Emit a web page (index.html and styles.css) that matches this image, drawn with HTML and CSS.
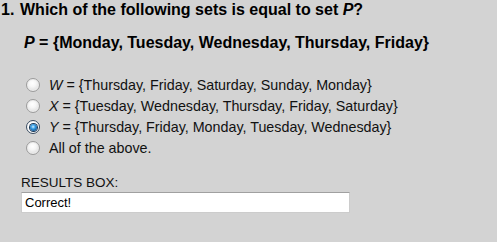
FILE: index.html
```html
<!DOCTYPE html>
<html>
<head>
<meta charset="utf-8">
<link rel="stylesheet" href="styles.css">
</head>
<body>
<div class="quiz">
  <div class="question"><span class="num">1.</span><span>Which of the following sets is equal to set <i>P</i>?</span></div>
  <div class="setp"><i>P</i> = {Monday, Tuesday, Wednesday, Thursday, Friday}</div>
  <div class="options">
    <label class="opt"><span class="radio"></span><span><i>W</i> = {Thursday, Friday, Saturday, Sunday, Monday}</span></label>
    <label class="opt"><span class="radio"></span><span><i>X</i> = {Tuesday, Wednesday, Thursday, Friday, Saturday}</span></label>
    <label class="opt"><span class="radio checked"></span><span><i>Y</i> = {Thursday, Friday, Monday, Tuesday, Wednesday}</span></label>
    <label class="opt"><span class="radio"></span><span>All of the above.</span></label>
  </div>
  <div class="results">
    <div class="rlabel">RESULTS BOX:</div>
    <div class="rbox">Correct!</div>
  </div>
</div>
</body>
</html>
```

FILE: styles.css
```css
html, body {
  margin: 0;
  padding: 0;
  background: #d3d3d3;
}
body {
  font-family: "Liberation Sans", Arial, sans-serif;
  color: #000;
  width: 497px;
  height: 242px;
  overflow: hidden;
}
.quiz {
  padding: 0 0 0 1px;
}
.question {
  display: flex;
  font-weight: bold;
  font-size: 16px;
  line-height: 18px;
  padding-top: 1px;
}
.num {
  width: 19px;
}
.setp {
  font-weight: bold;
  font-size: 16px;
  line-height: 18px;
  margin: 15px 0 0 23px;
}
.options {
  margin: 24px 0 0 25px;
  display: flex;
  flex-direction: column;
  gap: 3px;
}
.opt {
  display: flex;
  align-items: center;
  font-size: 14.3px;
  line-height: 18px;
  color: #111;
}
.radio {
  width: 12px;
  height: 12px;
  border-radius: 50%;
  border: 1px solid #9c9c9c;
  background: radial-gradient(circle at 45% 35%, #ffffff 0%, #f6f6f6 35%, #d0d0d0 100%);
  box-shadow: inset 0 0 0 1px #ececec;
  margin-right: 9px;
  box-sizing: content-box;
  position: relative;
}
.radio.checked {
  border-color: #3a4d62;
  background: radial-gradient(circle at 50% 50%, #ffffff 55%, #dcdcdc 100%);
  box-shadow: none;
}
.radio.checked::after {
  content: "";
  position: absolute;
  left: 2.5px;
  top: 2.5px;
  width: 7px;
  height: 7px;
  border-radius: 50%;
  background: radial-gradient(circle at 45% 40%, #d2f0ff 0%, #3aa0e6 35%, #0b4c8a 80%, #0a2e52 100%);
  box-shadow: 0 0 0 1px #1a3856;
}
.results {
  margin: 18px 0 0 20px;
}
.rlabel {
  font-size: 13.5px;
  line-height: 15px;
  color: #111;
}
.rbox {
  width: 324px;
  height: 19px;
  background: #fff;
  border: 1px solid #cccccc;
  border-top-color: #a0a0a0;
  font-size: 13px;
  line-height: 19px;
  padding-left: 3px;
  margin-top: 2px;
  box-sizing: content-box;
}
```
